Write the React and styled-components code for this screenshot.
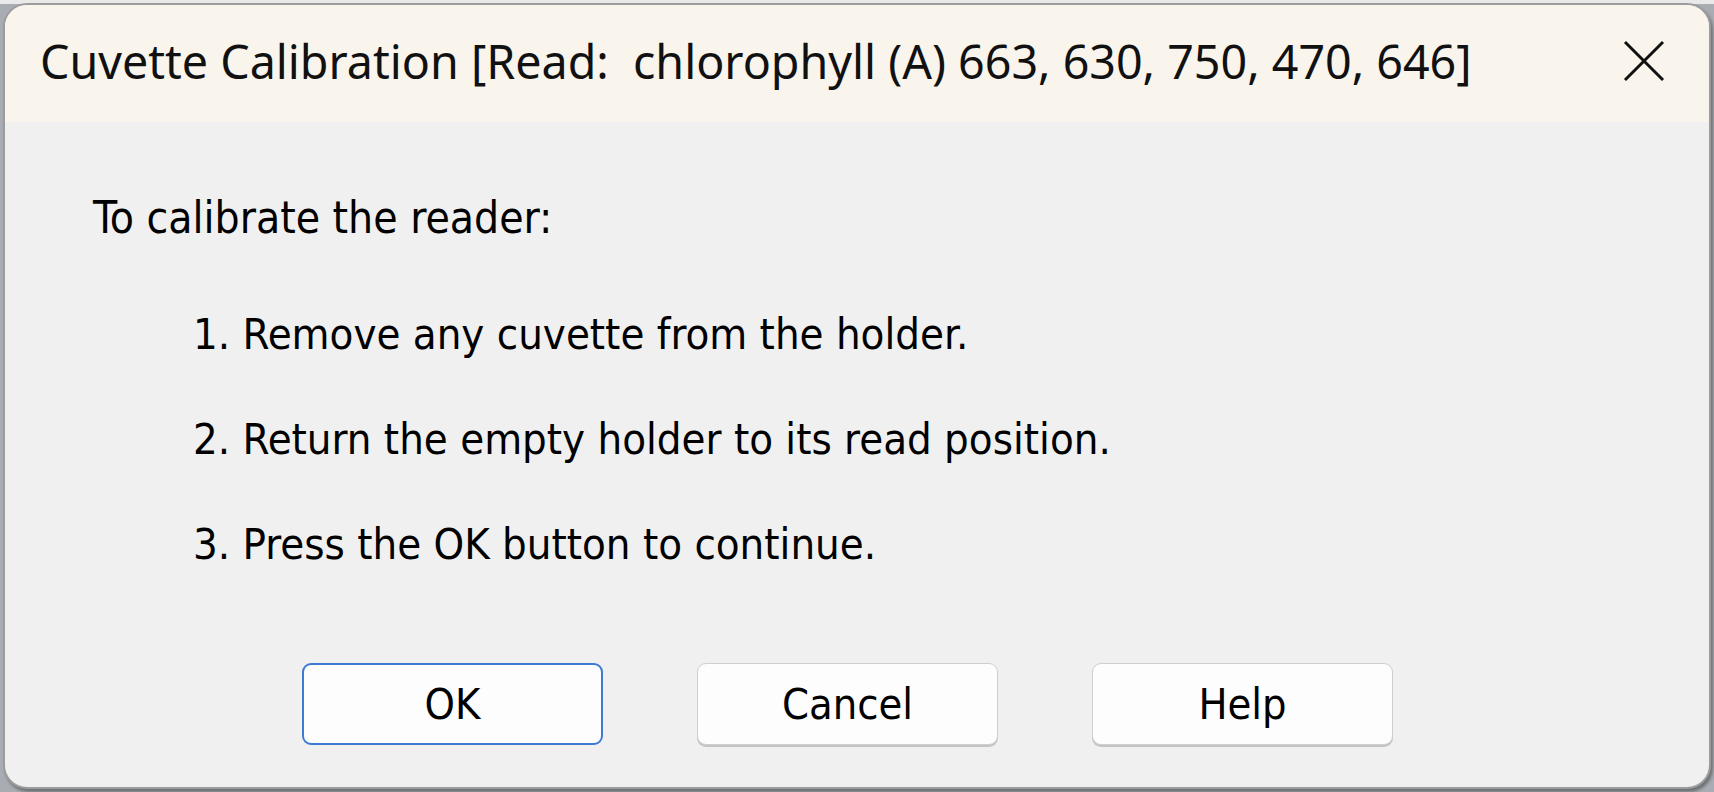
import React from 'react';
import styled, { createGlobalStyle } from 'styled-components';

const GlobalStyle = createGlobalStyle`
  html, body {
    margin: 0;
    padding: 0;
    background: #c4c7cb;
  }
  #root {
    width: 1714px;
    height: 792px;
    overflow: hidden;
  }
`;

const Backdrop = styled.div`
  width: 1714px;
  height: 792px;
  box-sizing: border-box;
  padding: 3px 3px 3px 3px;
  background: linear-gradient(to bottom, #e9e9e9 0px, #e9e9e9 4px, #a9adb3 4px);
`;

const Window = styled.div`
  height: 100%;
  box-sizing: border-box;
  display: flex;
  flex-direction: column;
  border: 2px solid #9c9c9c;
  border-radius: 24px;
  overflow: hidden;
  background: #f0f0f0;
  box-shadow: 2px 3px 3px rgba(0, 0, 0, 0.35);
`;

const TitleBar = styled.div`
  height: 117px;
  flex: none;
  display: flex;
  align-items: center;
  justify-content: space-between;
  padding: 0 43px 0 35px;
  background: #f9f4ec;
`;

const Title = styled.div`
  font-family: 'Noto Sans', 'Open Sans', sans-serif;
  font-size: 46.6px;
  color: #111;
  white-space: pre;
  margin-top: -6px;
`;

const CloseButton = styled.button`
  width: 44px;
  height: 44px;
  padding: 0;
  border: none;
  background: transparent;
  display: flex;
  align-items: center;
  justify-content: center;
  margin-top: -6px;
`;

const Body = styled.div`
  flex: 1;
  display: flex;
  flex-direction: column;
  padding: 0 0 0 88px;
  font-family: 'DejaVu Sans', sans-serif;
  font-stretch: condensed;
  color: #000;
`;

const Intro = styled.div`
  font-size: 44px;
  line-height: 52px;
  margin-top: 70px;
`;

const Steps = styled.ol`
  list-style: none;
  margin: 64px 0 0 0;
  padding: 0 0 0 100px;
  display: flex;
  flex-direction: column;
  gap: 53px;
`;

const Step = styled.li`
  font-size: 43.3px;
  line-height: 52px;
`;

const ButtonRow = styled.div`
  display: flex;
  gap: 94px;
  padding-left: 209px;
  margin-top: 93px;
`;

const DialogButton = styled.button`
  width: 301px;
  height: 82px;
  box-sizing: border-box;
  background: #fdfdfd;
  border: ${(p) => (p.$primary ? '2px solid #3c7ad3' : '1px solid #cfcfcf')};
  border-radius: 9px;
  box-shadow: ${(p) => (p.$primary ? 'none' : '0 2px 0 #c4c4c4')};
  font-family: 'DejaVu Sans', sans-serif;
  font-stretch: condensed;
  font-size: 43px;
  color: #000;
  padding: 0;
`;

const steps = [
  '1. Remove any cuvette from the holder.',
  '2. Return the empty holder to its read position.',
  '3. Press the OK button to continue.',
];

const App = () => (
  <>
    <GlobalStyle />
    <Backdrop>
      <Window>
        <TitleBar>
          <Title>Cuvette Calibration [Read:  chlorophyll (A) 663, 630, 750, 470, 646]</Title>
          <CloseButton aria-label="Close">
            <svg width="42" height="42" viewBox="0 0 42 42">
              <path d="M2 2 L40 40 M40 2 L2 40" stroke="#111" strokeWidth="3" fill="none" />
            </svg>
          </CloseButton>
        </TitleBar>
        <Body>
          <Intro>To calibrate the reader:</Intro>
          <Steps>
            {steps.map((s) => (
              <Step key={s}>{s}</Step>
            ))}
          </Steps>
          <ButtonRow>
            <DialogButton $primary>OK</DialogButton>
            <DialogButton>Cancel</DialogButton>
            <DialogButton>Help</DialogButton>
          </ButtonRow>
        </Body>
      </Window>
    </Backdrop>
  </>
);

export default App;
